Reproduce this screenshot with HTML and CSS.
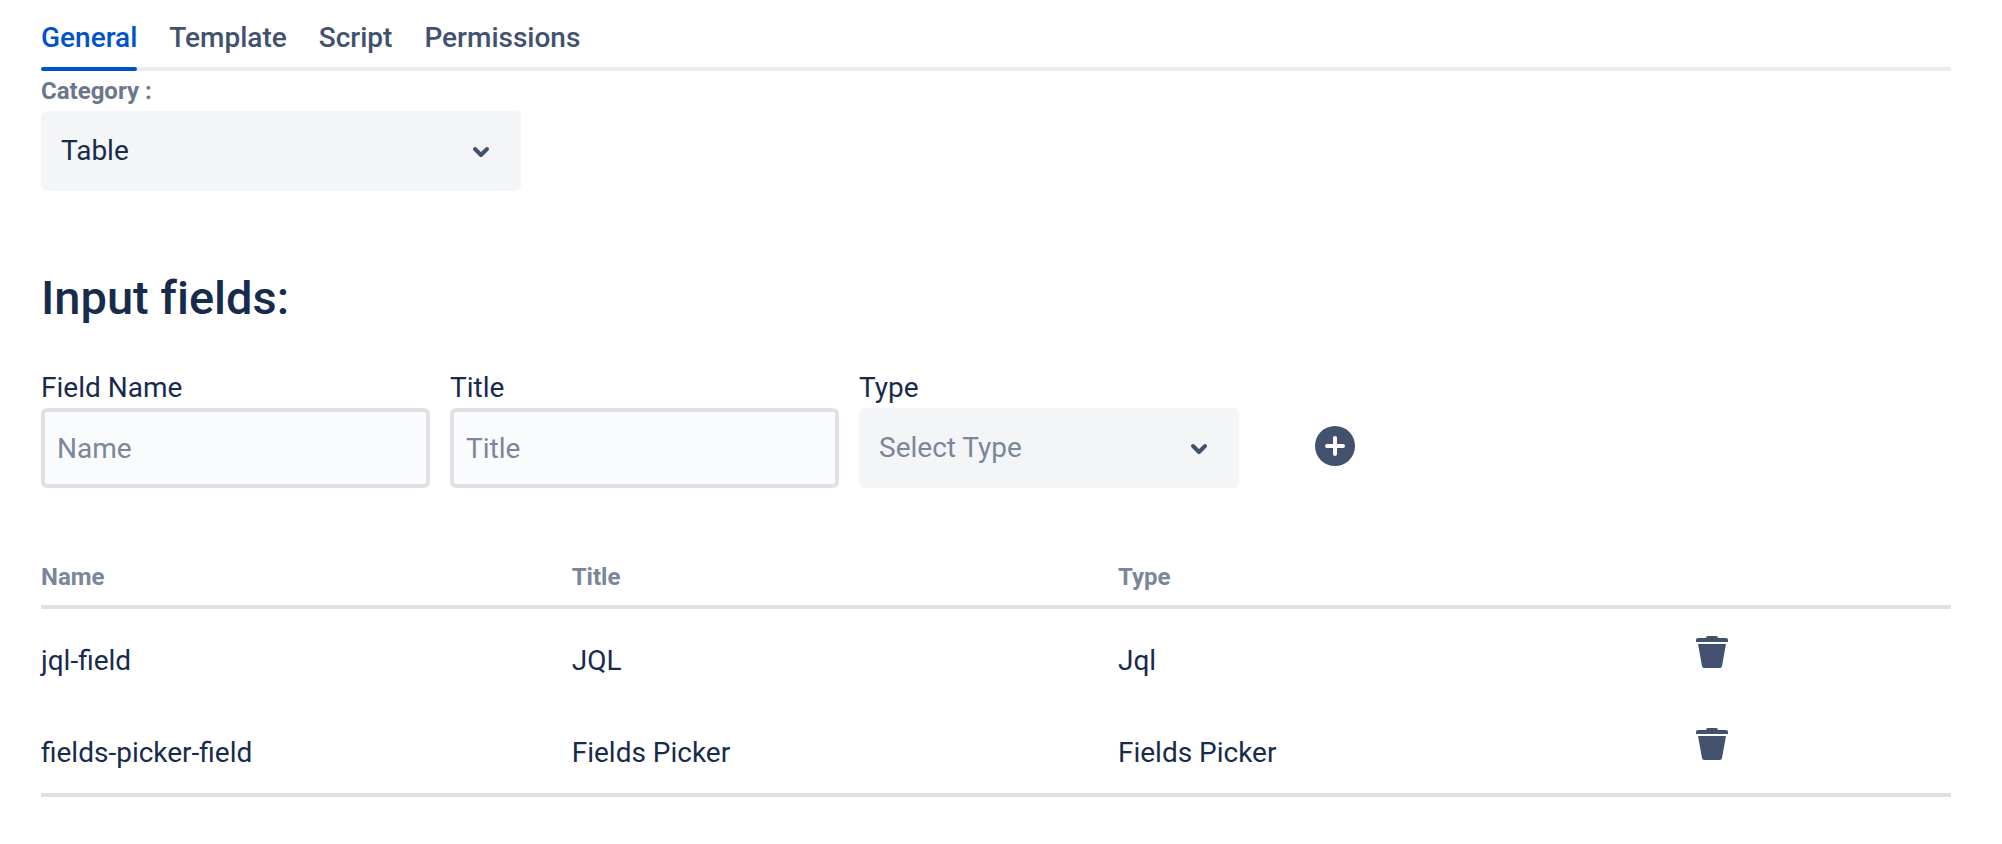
FILE: index.html
```
<!DOCTYPE html>
<html lang="en">
<head>
    <meta charset="utf-8">
    <meta name="viewport" content="width=device-width, initial-scale=1">
    <title>Input fields</title>
    <link rel="stylesheet" href="styles.css">
</head>
<body>
    <div class="tabs" role="tablist">
        <button class="tab active" type="button" role="tab" aria-selected="true">General</button>
        <button class="tab" type="button" role="tab" aria-selected="false">Template</button>
        <button class="tab" type="button" role="tab" aria-selected="false">Script</button>
        <button class="tab" type="button" role="tab" aria-selected="false">Permissions</button>
    </div>

    <main>
        <label class="category-label" for="category">Category :</label>
        <div class="select category">
            <select id="category">
                <option>Table</option>
            </select>
            <svg class="chevron" viewBox="0 0 48 48"><path d="M18 22l6 6 6-6"/></svg>
        </div>

        <h1>Input fields:</h1>

        <form class="add-field">
            <div class="field">
                <label for="field-name">Field Name</label>
                <input id="field-name" type="text" placeholder="Name">
            </div>
            <div class="field">
                <label for="field-title">Title</label>
                <input id="field-title" type="text" placeholder="Title">
            </div>
            <div class="field field-type">
                <label for="field-type">Type</label>
                <div class="select placeholder">
                    <select id="field-type">
                        <option value="">Select Type</option>
                        <option>Jql</option>
                        <option>Fields Picker</option>
                    </select>
                    <svg class="chevron" viewBox="0 0 48 48"><path d="M18 22l6 6 6-6"/></svg>
                </div>
            </div>
            <button class="icon-button add" type="button" aria-label="Add field">
                <svg viewBox="0 0 48 48">
                    <circle cx="24" cy="24" r="20"/>
                    <path class="plus" d="M24 16v16M16 24h16"/>
                </svg>
            </button>
        </form>

        <table>
            <colgroup>
                <col class="col-name">
                <col class="col-title">
                <col class="col-type">
                <col>
            </colgroup>
            <thead>
                <tr>
                    <th>Name</th>
                    <th>Title</th>
                    <th>Type</th>
                    <th></th>
                </tr>
            </thead>
            <tbody>
                <tr>
                    <td>jql-field</td>
                    <td>JQL</td>
                    <td>Jql</td>
                    <td class="actions">
                        <button class="icon-button" type="button" aria-label="Delete jql-field">
                            <svg viewBox="0 0 48 48"><path d="M10 16h28l-4 22q-.4 2-2 2H16q-1.600 0-2-2zM8 14v-2q0-2 2-2h8q0-2 2-2h8q2 0 2 2h8q2 0 2 2v2z"/></svg>
                        </button>
                    </td>
                </tr>
                <tr>
                    <td>fields-picker-field</td>
                    <td>Fields Picker</td>
                    <td>Fields Picker</td>
                    <td class="actions">
                        <button class="icon-button" type="button" aria-label="Delete fields-picker-field">
                            <svg viewBox="0 0 48 48"><path d="M10 16h28l-4 22q-.4 2-2 2H16q-1.600 0-2-2zM8 14v-2q0-2 2-2h8q0-2 2-2h8q2 0 2 2h8q2 0 2 2v2z"/></svg>
                        </button>
                    </td>
                </tr>
            </tbody>
        </table>
    </main>
</body>
</html>
```
FILE: styles.css
```
* {
    box-sizing: border-box;
}
body {
    margin: 0;
    padding: 18px 51px 40px 41px;
    background-color: #fff;
    color: #172b4d;
    font-family: Roboto, "Liberation Sans", sans-serif;
    font-size: 28px;
    line-height: 40px;
}
button, input, select {
    font: inherit;
    color: inherit;
}
.tabs {
    display: flex;
    gap: 32px;
    background: linear-gradient(#ebecf0, #ebecf0) bottom / 100% 4px no-repeat;
}
.tab {
    padding: 0;
    border: none;
    background: none;
    color: #42526e;
    font-weight: 500;
    cursor: pointer;
}
.tab::after {
    content: "";
    display: block;
    height: 4px;
    margin-top: 9px;
    border-radius: 2px;
}
.tab.active {
    color: #0052cc;
}
.tab.active::after {
    background-color: #0052cc;
}
.category-label {
    display: block;
    color: #6b778c;
    font-size: 24px;
    font-weight: 700;
    padding: 2px 0;
    line-height: 36px;
}
.select {
    display: grid;
    align-items: center;
    height: 80px;
    border-radius: 6px;
    background-color: #f4f5f7;
}
.select select,
.chevron {
    grid-area: 1 / 1;
}
.select select {
    width: 100%;
    height: 100%;
    padding: 0 64px 0 20px;
    border: none;
    border-radius: 6px;
    background: transparent;
    appearance: none;
}
.category {
    width: 480px;
    max-width: 100%;
}
.placeholder select {
    color: #7a869a;
}
.chevron {
    justify-self: end;
    width: 48px;
    height: 48px;
    margin-right: 16px;
    fill: none;
    stroke: #42526e;
    stroke-width: 4;
    stroke-linecap: round;
    stroke-linejoin: round;
    pointer-events: none;
}
h1 {
    margin: 79px 0 42px;
    font-size: 47px;
    font-weight: 500;
    line-height: 56px;
    font-variant-ligatures: none;
}
.add-field {
    display: flex;
    flex-wrap: wrap;
    align-items: flex-end;
    gap: 20px;
}
.field {
    width: 389px;
}
.field-type {
    width: 380px;
}
.field label {
    display: block;
}
.field input {
    display: block;
    width: 100%;
    height: 80px;
    padding: 0 12px;
    border: 4px solid #dfe1e6;
    border-radius: 6px;
    background-color: #fafbfc;
}
.field input::placeholder {
    color: #7a869a;
    opacity: 1;
}
.icon-button {
    display: block;
    width: 48px;
    height: 48px;
    padding: 0;
    border: none;
    background: none;
    cursor: pointer;
}
.icon-button svg {
    display: block;
    fill: #42526e;
}
.add {
    margin: 0 0 18px 52px;
}
.plus {
    stroke: #fff;
    stroke-width: 4;
    stroke-linecap: round;
}
table {
    width: 100%;
    margin-top: 56px;
    border-collapse: separate;
    border-spacing: 0;
    table-layout: fixed;
}
.col-name {
    width: 27%;
}
.col-title {
    width: 28.6%;
}
.col-type {
    width: 29%;
}
th {
    padding: 17px 16px 12px 15px;
    border-bottom: 4px solid #dfe1e6;
    color: #7a869a;
    font-size: 24px;
    font-weight: 700;
    line-height: 32px;
    text-align: left;
}
td {
    padding: 32px 16px 20px 15px;
    vertical-align: top;
}
th:first-child,
td:first-child {
    padding-left: 0;
}
tbody tr:last-child td {
    border-bottom: 4px solid #dfe1e6;
}
.actions {
    padding: 19px 31px 20px;
}
```
